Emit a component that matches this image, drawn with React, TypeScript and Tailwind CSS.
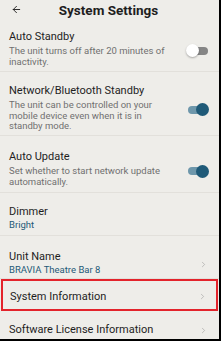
import { ArrowLeft, ChevronRight } from "lucide-react";

function Toggle({ on }: { on: boolean }) {
  return (
    <div className="relative w-[20px] h-[13px] flex items-center flex-shrink-0">
      <div className={`w-full h-[8px] rounded-full ${on ? "bg-[#6e97ab]" : "bg-[#858585]"}`} />
      <div
        className={`absolute top-0 w-[13px] h-[13px] rounded-full ${
          on ? "right-[-1px] bg-[#1f5a78]" : "left-[-2px] bg-white shadow-[0_1px_2px_rgba(0,0,0,0.3)]"
        }`}
      />
    </div>
  );
}

function Row({
  title, desc, value, right, h, pt, boxed,
}: {
  title: string;
  desc?: string;
  value?: string;
  right?: "on" | "off" | "chev";
  h: string;
  pt?: string;
  boxed?: boolean;
}) {
  const stacked = !!(desc || value);
  return (
    <div
      className={`${h} flex-shrink-0 ${boxed ? "border-2 border-[#e3232b] mx-[1px] pl-[7px] pr-[9px]" : "border-b border-[#e2e0db] pl-[9px] pr-[11px]"} flex ${stacked ? "items-start" : "items-center"} ${pt ?? ""}`}
    >
      <div className="flex-1 min-w-0">
        <div className="text-[11px] leading-[14px] text-[#1e1e1e]">{title}</div>
        {desc && <div className="mt-[2px] text-[9.5px] leading-[10.5px] text-[#707070] pr-[6px]">{desc}</div>}
        {value && <div className="text-[9.5px] leading-[12px] text-[#1f5a78]">{value}</div>}
      </div>
      {right === "chev" ? (
        <ChevronRight className="w-[9px] h-[9px] text-[#999999] self-center" strokeWidth={1.5} />
      ) : right ? (
        <div className="self-center ml-[8px]">
          <Toggle on={right === "on"} />
        </div>
      ) : null}
    </div>
  );
}

export default function App() {
  return (
    <div
      className="w-[221px] h-[341px] overflow-hidden bg-[#eeede9] border-r-2 border-b-2 border-black flex flex-col"
      style={{ fontFamily: "Roboto, 'Noto Sans', sans-serif" }}
    >
      <header className="h-[20px] flex items-center relative flex-shrink-0">
        <ArrowLeft className="absolute left-[11px] top-[4px] w-[11px] h-[11px] text-[#1e1e1e]" strokeWidth={2} />
        <div className="w-full text-center text-[13.5px] leading-[20px] font-bold text-[#1e1e1e] pr-[2px]">System Settings</div>
      </header>
      <Row h="h-[52px]" pt="pt-[10px]" title="Auto Standby" desc="The unit turns off after 20 minutes of inactivity." right="off" />
      <Row h="h-[64px]" pt="pt-[12px]" title="Network/Bluetooth Standby" desc="The unit can be controlled on your mobile device even when it is in standby mode." right="on" />
      <Row h="h-[57px]" pt="pt-[14px]" title="Auto Update" desc="Set whether to start network update automatically." right="on" />
      <Row h="h-[43px]" pt="pt-[12px]" title="Dimmer" value="Bright" />
      <Row h="h-[43px]" pt="pt-[14px]" title="Unit Name" value="BRAVIA Theatre Bar 8" right="chev" />
      <Row h="h-[32px]" pt="pt-[3px]" title="System Information" right="chev" boxed />
      <Row h="h-[36px]" pt="pt-[3px]" title="Software License Information" right="chev" />
    </div>
  );
}
